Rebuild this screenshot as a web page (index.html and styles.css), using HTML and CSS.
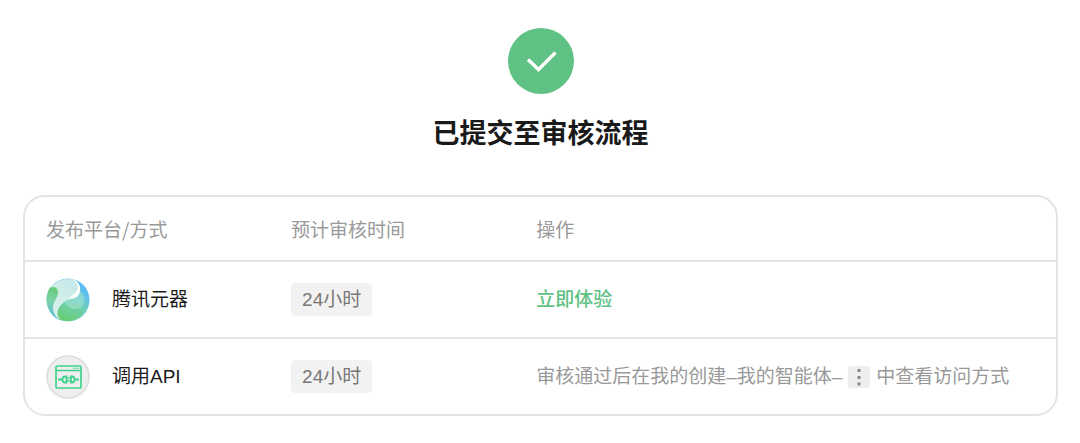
FILE: index.html
```html
<!DOCTYPE html>
<html lang="zh-CN">

<head>
    <meta charset="utf-8">
    <title>已提交至审核流程</title>
    <link rel="stylesheet" href="styles.css">
</head>

<body>
    <header class="result">
        <svg class="result-icon" viewBox="0 0 66 66" aria-hidden="true">
            <circle cx="33" cy="33" r="33" fill="#60c184"/>
            <path d="M20 31.500L30.500 41.500L47.500 24.500" fill="none" stroke="#fff" stroke-width="3.400"/>
        </svg>
        <h1 class="result-title">已提交至审核流程</h1>
    </header>

    <table class="platforms">
        <thead>
            <tr>
                <th class="col-platform">发布平台/方式</th>
                <th class="col-time">预计审核时间</th>
                <th>操作</th>
            </tr>
        </thead>
        <tbody>
            <tr>
                <td>
                    <div class="platform">
                        <svg class="platform-icon" viewBox="0 0 44 44" aria-hidden="true">
                            <defs>
                                <linearGradient id="ball" x1="1" y1="0" x2="0.300" y2="1">
                                    <stop offset="0" stop-color="#4fb2f6"/>
                                    <stop offset="0.500" stop-color="#6bc8e0"/>
                                    <stop offset="1" stop-color="#68cd88"/>
                                </linearGradient>
                                <linearGradient id="leaf" x1="0.300" y1="0" x2="0.200" y2="1">
                                    <stop offset="0" stop-color="#68cc7c"/>
                                    <stop offset="0.400" stop-color="#7ad0a4"/>
                                    <stop offset="1" stop-color="#5cbcf0"/>
                                </linearGradient>
                                <linearGradient id="swirl" x1="0.800" y1="0" x2="0.300" y2="1">
                                    <stop offset="0" stop-color="#c5e8ea"/>
                                    <stop offset="1" stop-color="#dcf2e6"/>
                                </linearGradient>
                                <linearGradient id="shine" x1="0" y1="0.800" x2="0.600" y2="0.300">
                                    <stop offset="0.100" stop-color="#fff" stop-opacity="0.200"/>
                                    <stop offset="0.700" stop-color="#fff"/>
                                </linearGradient>
                                <linearGradient id="body" x1="0.900" y1="0" x2="0.400" y2="1">
                                    <stop offset="0" stop-color="#66c4e6"/>
                                    <stop offset="0.500" stop-color="#70cfa6"/>
                                    <stop offset="1" stop-color="#68cd76"/>
                                </linearGradient>
                                <linearGradient id="drop" x1="0.600" y1="0" x2="0.400" y2="1">
                                    <stop offset="0" stop-color="#86d4e4"/>
                                    <stop offset="1" stop-color="#92dcb8"/>
                                </linearGradient>
                            </defs>
                            <circle cx="22" cy="22" r="21.500" fill="url(#ball)"/>
                            <path d="M12 41C10 32 14 24 24 21L43 20C43 34 31 46 14 42Z" fill="url(#body)"/>
                            <path d="M19 24C25 21 32 20 33 12C39 16 40 25 35 29C30 33 22 31 19 24Z" fill="url(#drop)"/>
                            <path d="M2 14C6 5 16 0 26 1C33 3 36 10 33 16C30 22 22 20 17 25C10 31 10 38 15 42C5 38 0 28 2 14Z" fill="url(#swirl)"/>
                            <path d="M26 1C33 3 36 10 33 16C30 22 23 20 19 24C24 17 32 16 32 9C31 5 29 3 26 1Z" fill="url(#shine)"/>
                            <path d="M3 11C5 8 11 8 12 13C13 19 7 23 7 30C7 35 10 39 14 42C3 38 -3 23 3 11Z" fill="url(#leaf)"/>
                        </svg>
                        <span>腾讯元器</span>
                    </div>
                </td>
                <td><span class="tag">24小时</span></td>
                <td><a class="try-link" href="#">立即体验</a></td>
            </tr>
            <tr>
                <td>
                    <div class="platform">
                        <svg class="platform-icon" viewBox="0 0 44 44" fill="none" stroke="#3fd38b" aria-hidden="true">
                            <circle cx="22" cy="22" r="21" fill="#eee" stroke="#dcdcdc" stroke-width="1.500"/>
                            <rect x="10" y="11" width="25" height="22" rx="1" stroke-width="1.700"/>
                            <path d="M10 15.500H35" stroke-width="1.500"/>
                            <path d="M27 13.200H33.500" stroke-width="1" stroke-dasharray="1.600 0.600"/>
                            <path d="M12 24.500H16.500M28.500 24.500H33" stroke-width="1.800"/>
                            <path d="M20.500 21.500H19Q16.500 21.500 16.500 24.500Q16.500 27.500 19 27.500H20.500ZM25 21.500H26Q28.500 21.500 28.500 24.500Q28.500 27.500 26 27.500H25Z" stroke-width="1.800"/>
                            <path d="M21 23.200H25M21 25.800H25" stroke-width="1.200"/>
                        </svg>
                        <span>调用API</span>
                    </div>
                </td>
                <td><span class="tag">24小时</span></td>
                <td class="hint">审核通过后在我的创建–我的智能体–<svg class="more-icon" viewBox="0 0 22 22" role="img" aria-label="更多">
                        <rect width="22" height="22" rx="3" fill="#eee"/>
                        <path d="M9.500 3h3v3h-3zM9.500 10h3v3h-3zM9.500 16.500h3v3h-3z" fill="#888"/>
                    </svg>中查看访问方式</td>
            </tr>
        </tbody>
    </table>
</body>

</html>
```

FILE: styles.css
```css
body {
    margin: 0;
    padding: 28px 22px 28px 23px;
    background-color: #fff;
    color: #1a1a1a;
    font-family: "Liberation Sans", "Noto Sans CJK SC", sans-serif;
    font-size: 19px;
    line-height: 29px;
}

.result {
    display: flex;
    flex-direction: column;
    align-items: center;
    gap: 20px;
    margin-bottom: 41px;
}

.result-icon {
    width: 66px;
    height: 66px;
}

.result-title {
    margin: 0;
    font-size: 27px;
    font-weight: bold;
    line-height: 40px;
}

.platforms {
    width: 100%;
    border: 2px solid #e4e4e4;
    border-radius: 22px;
    border-spacing: 0;
    table-layout: fixed;
}

.platforms th,
.platforms td {
    padding: 0 21px;
    text-align: left;
    vertical-align: middle;
}

.platforms th {
    height: 63px;
    color: #999;
    font-family: "Noto Sans CJK SC", sans-serif;
    font-weight: normal;
}

.platforms td {
    height: 75px;
    border-top: 2px solid #e4e4e4;
}

.col-platform,
.col-time {
    width: 19.7%;
}

.platform {
    display: flex;
    align-items: center;
    gap: 22px;
}

.platform-icon {
    flex: none;
    width: 44px;
    height: 44px;
}

.tag {
    display: inline-block;
    padding: 2px 11px;
    border-radius: 4px;
    background-color: #f2f2f2;
    color: #777;
}

.try-link {
    color: #60c184;
    font-weight: 500;
    text-decoration: none;
}

.platforms .hint {
    color: #999;
    white-space: nowrap;
}

.more-icon {
    width: 22px;
    height: 22px;
    margin: 0 6px;
    vertical-align: -5px;
}
```
